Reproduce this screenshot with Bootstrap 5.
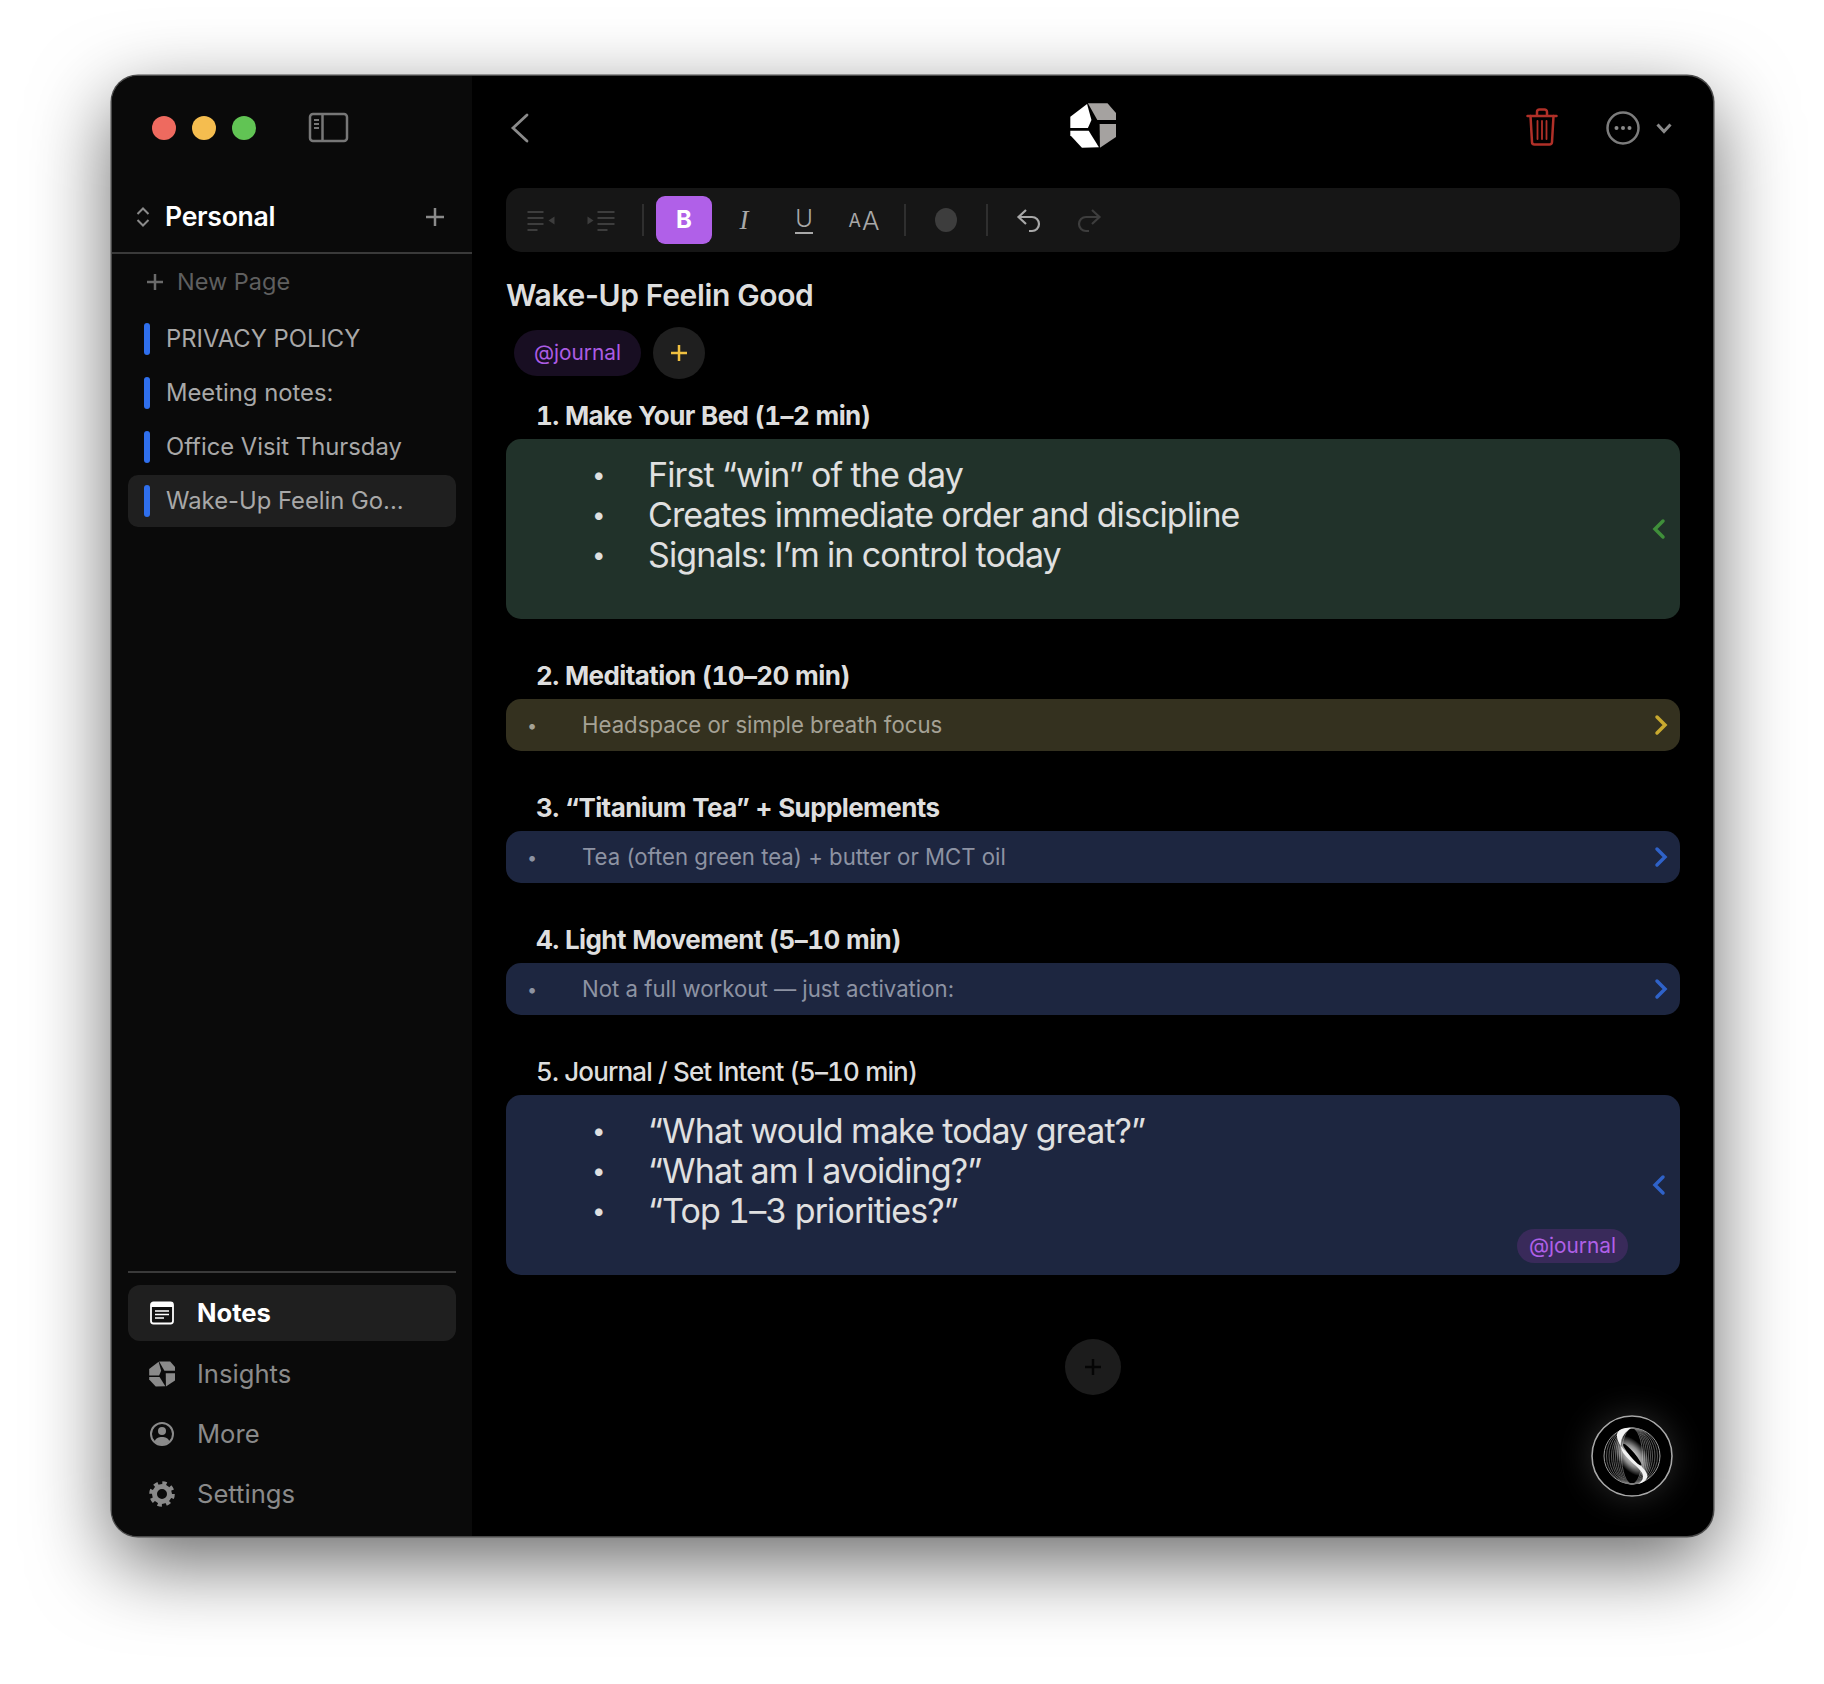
<!DOCTYPE html>
<html lang="en">

<head>
  <meta charset="UTF-8" />
  <meta name="viewport" content="width=device-width, initial-scale=1" />
  <title>Notes</title>
  <link href="https://cdn.jsdelivr.net/npm/bootstrap@5.3.0/dist/css/bootstrap.min.css" rel="stylesheet" />
  <style>
    body {
      background: #fff;
      font-family: "Inter", "Liberation Sans", sans-serif;
      padding: 76px 111px 0 112px;
      min-height: 1684px;
    }

    .app-window {
      height: 1460px;
      background: #000;
      border-radius: 26px;
      box-shadow: 0 0 0 1.5px #4a4a4a, 0 26px 80px rgba(0, 0, 0, .6);
      overflow: hidden;
    }

    .sidebar {
      width: 360px;
      background: #0a0a0a;
      flex-shrink: 0;
    }

    .traffic {
      height: 104px;
      padding-left: 40px;
    }

    .light {
      width: 24px;
      height: 24px;
      border-radius: 50%;
      margin-right: 16px;
    }

    .sidebar-toggle {
      margin: 0 0 2px 36px;
    }

    .workspace {
      height: 74px;
      padding: 2px 24px 0;
      border-bottom: 2px solid #3a3a3a;
    }

    .workspace strong {
      color: #fff;
      font-size: 26.6px;
      font-weight: 600;
      letter-spacing: -.3px;
      margin-left: 15px;
    }

    .workspace-add {
      margin-right: 3px;
    }

    .new-page {
      height: 56px;
      padding-left: 34px;
      margin-bottom: 3px;
      color: #5f5f5f;
      font-size: 23.5px;
    }

    .new-page span {
      margin-left: 13px;
    }

    .page-item {
      height: 52px;
      margin: 0 16px 2px;
      padding-left: 16px;
      border-radius: 10px;
      color: #a8a8a8;
      font-size: 23.8px;
    }

    .page-item i {
      display: block;
      width: 6px;
      height: 32px;
      border-radius: 3px;
      background: #2f6fed;
      margin-right: 16px;
    }

    .page-item.active-page,
    .nav-row.active-nav {
      background: #1f1f1f;
    }

    .side-bottom {
      margin: 0 16px 12px;
      border-top: 2px solid #3a3a3a;
      padding-top: 12px;
    }

    .nav-row {
      height: 60px;
      padding-left: 21px;
      color: #8a8a8a;
      font-size: 25.6px;
      border-radius: 12px;
    }

    .nav-row.active-nav {
      height: 56px;
      color: #fff;
      font-weight: 700;
      margin-bottom: 3px;
    }

    .nav-row svg {
      width: 26px;
      height: 26px;
      margin-right: 22px;
      flex-shrink: 0;
    }

    .main-pane {
      padding: 0 33px 0 34px;
    }

    .topbar {
      height: 104px;
      margin-bottom: 8px;
    }

    .top-left,
    .top-right {
      width: 200px;
    }

    .top-logo {
      margin-bottom: 5px;
    }

    .trash-icon {
      margin: 0 48px 2px 0;
    }

    .toolbar {
      height: 64px;
      background: #161616;
      border-radius: 15px;
      padding-left: 5px;
      color: #a8a8a8;
    }

    .tool {
      width: 60px;
      height: 48px;
      flex-shrink: 0;
    }

    .tool-bold {
      width: 56px;
      height: 48px;
      background: #b060e8;
      color: #fff;
      border-radius: 9px;
      font-size: 24px;
      font-weight: 700;
      margin: 0 2px 0 1px;
    }

    .tool-sep {
      width: 2px;
      height: 32px;
      background: #2f2f2f;
      margin: 0 11px;
    }

    .tool-sep.tight-left {
      margin-left: 10px;
    }

    .tool.tool-dot {
      width: 58px;
    }

    .tool-italic {
      font-family: "Liberation Serif", serif;
      font-style: italic;
      font-size: 27px;
    }

    .tool-under span {
      font-size: 24px;
      font-weight: 300;
      line-height: 26px;
      border-bottom: 2px solid #a8a8a8;
    }

    .tool-size {
      font-size: 26px;
      font-weight: 300;
    }

    .tool-size small {
      font-size: 18px;
      font-weight: 400;
      margin-right: 1px;
    }

    .dot {
      width: 22px;
      height: 24px;
      border-radius: 50%;
      background: #3d3d3d;
    }

    .note-title {
      color: #dedede;
      font-size: 30px;
      font-weight: 600;
      line-height: 40px;
      letter-spacing: -.35px;
      margin: 23px 0 12px;
    }

    .tag {
      color: #ac5ce4;
      font-size: 20.8px;
      border-radius: 23px;
    }

    .tag-row {
      margin-bottom: 19px;
    }

    .tag-top {
      height: 46px;
      width: 127px;
      background: #180e22;
      margin-left: 8px;
    }

    .tag-add {
      width: 52px;
      height: 52px;
      border-radius: 50%;
      background: #1f1f1f;
      margin-left: 12px;
    }

    .block-title {
      color: #dedede;
      font-size: 26px;
      font-weight: 700;
      font-variant-numeric: tabular-nums;
      line-height: 36px;
      letter-spacing: -.6px;
      margin: 0 0 5px 30px;
    }

    .block-title.plain {
      font-weight: 500;
      letter-spacing: -.85px;
    }

    .block {
      border-radius: 15px;
      margin-bottom: 39px;
    }

    .block-open {
      height: 180px;
      padding: 16px 0 0 86px;
      color: #e0e0e0;
      font-size: 34px;
      font-variant-numeric: tabular-nums;
      letter-spacing: -.9px;
      line-height: 40px;
    }

    .block-open ul {
      list-style: none;
      margin: 0;
      padding: 0;
    }

    .block-open li {
      display: flex;
    }

    .block-open li::before {
      content: "\2022";
      width: 56px;
      font-size: 24px;
    }

    .block-closed {
      height: 52px;
      padding-left: 21px;
      font-size: 22.2px;
    }

    .block-closed b {
      font-weight: 400;
      width: 55px;
      flex-shrink: 0;
      font-size: 18px;
    }

    .green-block {
      background: #21322a;
    }

    .yellow-block {
      background: #34311f;
      color: #a5a295;
    }

    .blue-block {
      background: #1d2640;
    }

    .blue-block.block-closed {
      color: #8d93a3;
    }

    .block-chevron {
      position: absolute;
      right: 13px;
      top: 50%;
      transform: translateY(-50%);
      width: 16px;
      height: 24px;
    }

    .block-closed .block-chevron {
      right: 11px;
    }

    .block-tag {
      position: absolute;
      right: 52px;
      bottom: 12px;
      width: 111px;
      height: 34px;
      background: #392a5a;
      color: #b060e8;
      font-size: 20.8px;
      letter-spacing: 0;
      line-height: 34px;
      text-align: center;
      border-radius: 17px;
    }

    .add-block {
      width: 56px;
      height: 56px;
      border-radius: 50%;
      background: #1c1c1c;
      margin: 64px auto 0;
    }

    .orb {
      position: absolute;
      right: 40px;
      bottom: 39px;
      width: 82px;
      height: 82px;
      border-radius: 50%;
      box-shadow: 0 0 34px rgba(255, 255, 255, .16);
    }
  </style>
</head>

<body>
  <svg width="0" height="0" class="position-absolute">
    <symbol id="logo-shape" viewBox="10 8.500 45 44">
      <polygon points="10.3,22 26.7,9.5 31,25 27.5,33 10.3,33" />
      <polygon points="10.3,35.7 28.3,35.7 38.3,51.7 21.7,52.3 10.3,40" />
    </symbol>
    <symbol id="logo-alt" viewBox="10 8.500 45 44">
      <polygon points="27.5,8.7 46.7,8.7 55,18.3 55,25 36.7,25" />
      <polygon points="39,29 55,29 55,41.7 39.3,52.3" />
    </symbol>
    <radialGradient id="orb-glow">
      <stop offset="0" stop-color="#fff" stop-opacity=".95" />
      <stop offset=".55" stop-color="#fff" stop-opacity=".55" />
      <stop offset="1" stop-color="#fff" stop-opacity="0" />
    </radialGradient>
  </svg>

  <div class="app-window d-flex">
    <aside class="sidebar d-flex flex-column">
      <div class="traffic d-flex align-items-center">
        <div class="light" style="background:#ee6a5f"></div>
        <div class="light" style="background:#f5bd4f"></div>
        <div class="light" style="background:#61c454"></div>
        <svg class="sidebar-toggle" width="41" height="31" viewBox="0 0 41 31" fill="none" stroke="#777" stroke-width="2.500">
          <rect x="2" y="2" width="37" height="27" rx="3" />
          <path d="M14.500 2v27" />
          <path d="M6 8h5M6 12h5M6 16h5" stroke-width="1.800" />
        </svg>
      </div>

      <div class="workspace d-flex align-items-center">
        <svg width="14" height="20" viewBox="0 0 14 20" fill="none" stroke="#8a8a8a" stroke-width="2">
          <path d="M1.500 7 7 1.500 12.500 7M1.500 13 7 18.500 12.500 13" />
        </svg>
        <strong>Personal</strong>
        <svg class="workspace-add ms-auto" width="20" height="20" viewBox="0 0 20 20" stroke="#8a8a8a" stroke-width="2.500">
          <path d="M10 1v18M1 10h18" />
        </svg>
      </div>

      <div class="new-page d-flex align-items-center">
        <svg width="18" height="18" viewBox="0 0 18 18" stroke="#6a6a6a" stroke-width="2.500">
          <path d="M9 1v16M1 9h16" />
        </svg>
        <span>New Page</span>
      </div>
      <div class="page-item d-flex align-items-center"><i></i>PRIVACY POLICY</div>
      <div class="page-item d-flex align-items-center"><i></i>Meeting notes:</div>
      <div class="page-item d-flex align-items-center"><i></i>Office Visit Thursday</div>
      <div class="page-item active-page d-flex align-items-center"><i></i>Wake-Up Feelin Go...</div>

      <div class="side-bottom mt-auto">
        <div class="nav-row active-nav d-flex align-items-center">
          <svg viewBox="0 0 26 26">
            <rect x="2" y="2.500" width="22" height="21" rx="2.500" fill="#111" stroke="#fff" stroke-width="1.800" />
            <path d="M2 5a2.500 2.500 0 0 1 2.500-2.500h17A2.500 2.500 0 0 1 24 5v2H2z" fill="#fff" />
            <path d="M6 11h14M6 14.500h14M6 18h9" stroke="#fff" stroke-width="1.500" />
          </svg>
          Notes
        </div>
        <div class="nav-row d-flex align-items-center">
          <svg viewBox="0 0 26 26" fill="#8a8a8a"><use href="#logo-shape" /><use href="#logo-alt" /></svg>
          Insights
        </div>
        <div class="nav-row d-flex align-items-center">
          <svg viewBox="0 0 26 26" fill="none" stroke="#8a8a8a" stroke-width="2">
            <circle cx="13" cy="13" r="11" />
            <circle cx="13" cy="10" r="4" fill="#8a8a8a" stroke="none" />
            <path d="M5.500 20.500c1.500-3.500 4-4.500 7.500-4.500s6 1 7.500 4.500a11 11 0 0 1-15 0z" fill="#8a8a8a" stroke="none" />
          </svg>
          More
        </div>
        <div class="nav-row d-flex align-items-center">
          <svg viewBox="0 0 26 26" fill="none" stroke="#8a8a8a">
            <circle cx="13" cy="13" r="7.500" stroke-width="5" />
            <circle cx="13" cy="13" r="10.800" stroke-width="4" stroke-dasharray="4.240 4.240" />
          </svg>
          Settings
        </div>
      </div>
    </aside>

    <main class="main-pane flex-grow-1 position-relative">
      <div class="topbar d-flex align-items-center justify-content-between">
        <div class="top-left">
          <svg class="ms-1" width="20" height="32" viewBox="0 0 20 32" fill="none" stroke="#8a8a8a" stroke-width="2.800" stroke-linecap="round">
            <path d="M17 3 3 16l14 13" />
          </svg>
        </div>
        <svg class="top-logo" width="46" height="45" viewBox="0 0 46 45">
          <use href="#logo-shape" width="46" height="45" fill="#fff" />
          <use href="#logo-alt" width="46" height="45" fill="#a5a2a0" />
        </svg>
        <div class="top-right d-flex align-items-center justify-content-end pe-2">
          <svg class="trash-icon" width="32" height="38" viewBox="0 0 32 38" fill="none" stroke="#b03028" stroke-width="2.500" stroke-linecap="round">
            <path d="M1.500 8h29M11 8V4a2.500 2.500 0 0 1 2.500-2.500h5A2.500 2.500 0 0 1 21 4v4" />
            <path d="M4.500 8l1.500 26a2.500 2.500 0 0 0 2.500 2.500h15a2.500 2.500 0 0 0 2.500-2.500l1.500-26" />
            <path d="M11.500 13v18M16 13v18M20.500 13v18" stroke-width="1.800" />
          </svg>
          <svg width="34" height="34" viewBox="0 0 34 34" fill="none" stroke="#7c7c7c" stroke-width="2.500" class="me-3">
            <circle cx="17" cy="17" r="15.500" />
            <circle cx="10.500" cy="17" r="2" fill="#8a8a8a" stroke="none" />
            <circle cx="17" cy="17" r="2" fill="#8a8a8a" stroke="none" />
            <circle cx="23.500" cy="17" r="2" fill="#8a8a8a" stroke="none" />
          </svg>
          <svg width="16" height="11" viewBox="0 0 16 11" fill="none" stroke="#8a8a8a" stroke-width="3">
            <path d="M1.500 1.500 8 8.500l6.500-7" />
          </svg>
        </div>
      </div>

      <div class="toolbar d-flex align-items-center">
        <div class="tool d-flex align-items-center justify-content-center">
          <svg width="30" height="30" viewBox="0 0 30 30" stroke="#3d3d3d" stroke-width="2">
            <path d="M1.500 7h16M1.500 13h16M1.500 19h16M1.500 25h10" />
            <path d="M28.500 11.500v8l-6-4z" fill="#3d3d3d" stroke="none" />
          </svg>
        </div>
        <div class="tool d-flex align-items-center justify-content-center">
          <svg width="30" height="30" viewBox="0 0 30 30" stroke="#3d3d3d" stroke-width="2">
            <path d="M1.500 11.500v8l6-4z" fill="#3d3d3d" stroke="none" />
            <path d="M11.500 7h17M11.500 13h17M11.500 19h17M11.500 25h10" />
          </svg>
        </div>
        <div class="tool-sep"></div>
        <div class="tool-bold d-flex align-items-center justify-content-center">B</div>
        <div class="tool tool-italic d-flex align-items-center justify-content-center">I</div>
        <div class="tool tool-under d-flex align-items-center justify-content-center"><span>U</span></div>
        <div class="tool tool-size d-flex align-items-center justify-content-center"><small>A</small>A</div>
        <div class="tool-sep tight-left"></div>
        <div class="tool tool-dot d-flex align-items-center justify-content-center"><div class="dot"></div></div>
        <div class="tool-sep"></div>
        <div class="tool d-flex align-items-center justify-content-center">
          <svg width="30" height="30" viewBox="0 0 30 30" fill="none" stroke="#a8a8a8" stroke-width="2.200">
            <path d="M12 5 4.500 12l7.500 7M4.500 12H18a7 7 0 0 1 0 14h-3" />
          </svg>
        </div>
        <div class="tool d-flex align-items-center justify-content-center">
          <svg width="30" height="30" viewBox="0 0 30 30" fill="none" stroke="#3d3d3d" stroke-width="2.200">
            <path d="M18 5l7.500 7-7.500 7M25.500 12H12a7 7 0 0 0 0 14h3" />
          </svg>
        </div>
      </div>

      <h1 class="note-title">Wake-Up Feelin Good</h1>
      <div class="tag-row d-flex align-items-center">
        <div class="tag tag-top d-flex align-items-center justify-content-center">@journal</div>
        <div class="tag-add d-flex align-items-center justify-content-center">
          <svg width="20" height="20" viewBox="0 0 20 20" stroke="#f0c040" stroke-width="2.500"><path d="M10 2v16M2 10h16" /></svg>
        </div>
      </div>

      <div class="block-title">1. Make Your Bed (1–2 min)</div>
      <div class="block block-open green-block position-relative">
        <ul>
          <li>First “win” of the day</li>
          <li>Creates immediate order and discipline</li>
          <li>Signals: I’m in control today</li>
        </ul>
        <svg class="block-chevron" viewBox="0 0 16 24" fill="none" stroke="#3f8f3a" stroke-width="3.500" stroke-linecap="round"><path d="M12 4 4 12l8 8" /></svg>
      </div>

      <div class="block-title">2. Meditation (10–20 min)</div>
      <div class="block block-closed yellow-block d-flex align-items-center position-relative">
        <b>•</b>Headspace or simple breath focus
        <svg class="block-chevron" viewBox="0 0 16 24" fill="none" stroke="#c8a92f" stroke-width="3.500" stroke-linecap="round"><path d="M4 4l8 8-8 8" /></svg>
      </div>

      <div class="block-title">3. “Titanium Tea” + Supplements</div>
      <div class="block block-closed blue-block d-flex align-items-center position-relative">
        <b>•</b>Tea (often green tea) + butter or MCT oil
        <svg class="block-chevron" viewBox="0 0 16 24" fill="none" stroke="#2f62c8" stroke-width="3.500" stroke-linecap="round"><path d="M4 4l8 8-8 8" /></svg>
      </div>

      <div class="block-title">4. Light Movement (5–10 min)</div>
      <div class="block block-closed blue-block d-flex align-items-center position-relative">
        <b>•</b>Not a full workout — just activation:
        <svg class="block-chevron" viewBox="0 0 16 24" fill="none" stroke="#2f62c8" stroke-width="3.500" stroke-linecap="round"><path d="M4 4l8 8-8 8" /></svg>
      </div>

      <div class="block-title plain">5. Journal / Set Intent (5–10 min)</div>
      <div class="block block-open blue-block position-relative">
        <ul>
          <li>“What would make today great?”</li>
          <li>“What am I avoiding?”</li>
          <li>“Top 1–3 priorities?”</li>
        </ul>
        <svg class="block-chevron" viewBox="0 0 16 24" fill="none" stroke="#2f62c8" stroke-width="3.500" stroke-linecap="round"><path d="M12 4 4 12l8 8" /></svg>
        <div class="block-tag">@journal</div>
      </div>

      <div class="add-block d-flex align-items-center justify-content-center">
        <svg width="18" height="18" viewBox="0 0 18 18" stroke="#050505" stroke-width="2.500"><path d="M9 1v16M1 9h16" /></svg>
      </div>

      <div class="orb">
        <svg width="82" height="82" viewBox="-1 -1 82 82" fill="none">
          <circle cx="40" cy="40" r="40" stroke="#a8a8a8" stroke-width="1.600" />
          <g stroke="#7e7e7e" stroke-width=".7">
            <circle cx="40" cy="40" r="28" stroke="#9a9a9a" stroke-width="1" />
            <ellipse cx="40" cy="40" rx="25.500" ry="28" />
            <ellipse cx="40" cy="40" rx="23" ry="28" />
            <ellipse cx="40" cy="40" rx="20.500" ry="28" />
            <ellipse cx="40" cy="40" rx="18.500" ry="28" />
            <ellipse cx="40" cy="40" rx="16.500" ry="28" />
            <ellipse cx="40" cy="40" rx="14.500" ry="28" />
            <ellipse cx="40" cy="40" rx="12.500" ry="28" />
            <ellipse cx="40" cy="40" rx="10.500" ry="28" />
          </g>
          <ellipse cx="40" cy="40" rx="24" ry="14" transform="rotate(50 40 40)" fill="url(#orb-glow)" />
          <path d="M39 12C30 11 24 15 25 21c1 9 11 16 18 23 7 7 12 11 12.500 16 -.5 4-4.500 7-9.500 8 5-3 6-7 4-11-4-7-12-11-18-19-5-7-5-18 7-26z" fill="#f2f2f2" />
          <ellipse cx="40.300" cy="38.700" rx="14" ry="2.500" transform="rotate(50 40.300 38.700)" fill="#000" />
        </svg>
      </div>
    </main>
  </div>

  <script src="https://cdn.jsdelivr.net/npm/bootstrap@5.3.0/dist/js/bootstrap.bundle.min.js"></script>
</body>

</html>
